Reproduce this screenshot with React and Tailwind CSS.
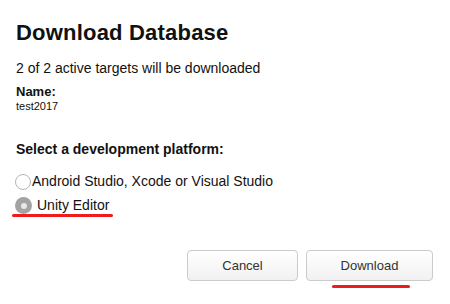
export default function App() {
  return (
    <div className="w-[450px] h-[304px] bg-white text-[#111] overflow-hidden" style={{ fontFamily: '"Liberation Sans", Arial, sans-serif' }}>
      <div className="pl-4 pt-[19px]">
        <h1 className="text-[22px] leading-[28px] font-bold tracking-[0.2px]">Download Database</h1>
        <p className="mt-[12px] text-[14px] leading-[18px]">2 of 2 active targets will be downloaded</p>
        <p className="mt-[7px] text-[13px] leading-[16px] font-bold">Name:</p>
        <p className="text-[11px] leading-[12px]">test2017</p>
        <p className="mt-[28px] text-[14px] leading-[18px] font-bold">Select a development platform:</p>
        <div className="mt-[15px] flex flex-col">
          <label className="flex items-center h-[17px] -ml-[1px]">
            <span className="w-[16px] h-[16px] rounded-full border border-[#b5b5b5] bg-white shrink-0" />
            <span className="ml-[1px] text-[14px] leading-[17px]">Android Studio, Xcode or Visual Studio</span>
          </label>
          <label className="flex items-center h-[17px] mt-[7px] -ml-[1px]">
            <span className="w-[17px] h-[17px] rounded-full bg-[#a3a3a3] shrink-0 flex items-center justify-center">
              <span className="w-[6px] h-[6px] rounded-full bg-[#e8e8e8]" />
            </span>
            <span className="ml-[5px] text-[14px] leading-[17px]">Unity Editor</span>
          </label>
          <div className="-ml-[4px] mt-[0px] w-[101px] h-[3px] rounded-full bg-[#ee1c1c]" />
        </div>
      </div>
      <div className="mt-[33px] flex justify-end gap-[8px] pr-[17px]">
        <button className="w-[111px] h-[31px] rounded-[4px] border border-[#cbcbcb] bg-gradient-to-b from-white to-[#f1f1f1] text-[13px] text-[#333]">Cancel</button>
        <button className="w-[127px] h-[31px] rounded-[4px] border border-[#cbcbcb] bg-gradient-to-b from-white to-[#f1f1f1] text-[13px] text-[#333]">Download</button>
      </div>
      <div className="flex justify-end pr-[40px] mt-[4px]">
        <div className="w-[78px] h-[3px] rounded-full bg-[#ee1c1c]" />
      </div>
    </div>
  );
}
